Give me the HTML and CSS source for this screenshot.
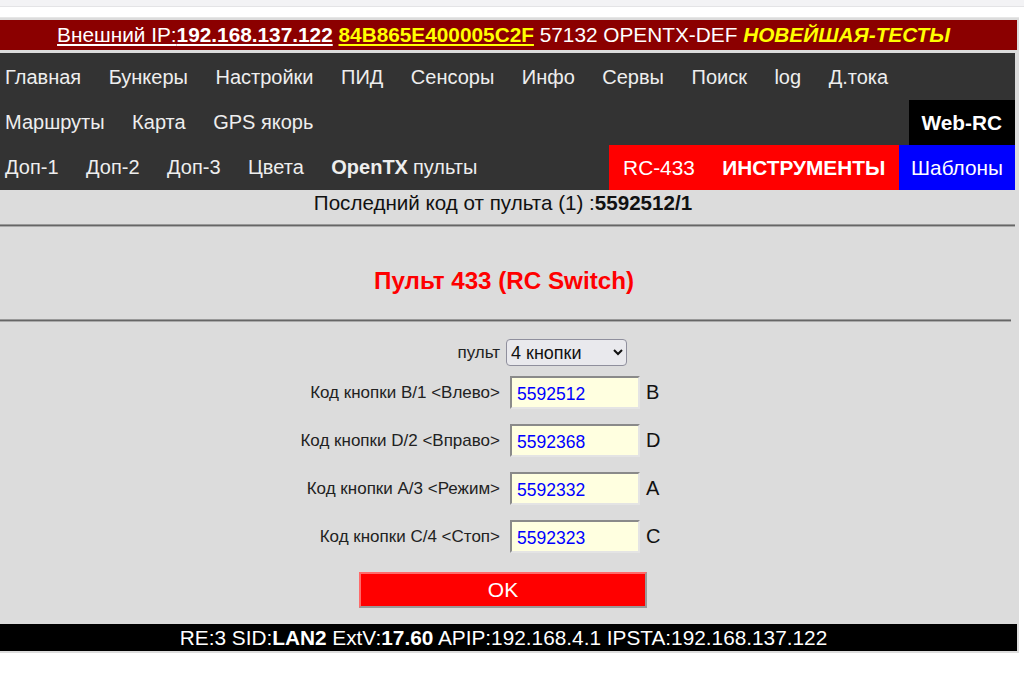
FILE: index.html
```html
<!DOCTYPE html>
<html lang="ru">
<head>
  <meta charset="UTF-8" />
  <meta name="viewport" content="width=device-width, initial-scale=1.0"/>
  <title>RC-433 | Пульты</title>
  <link rel="stylesheet" href="styles.css">
</head>
<body>

<div class="topbar"></div>

<div class="page">
  <div class="header">
    <a href="#" class="ip">Внешний IP:<b>192.168.137.122</b></a>
    <a href="#" class="chip">84B865E400005C2F</a>
    57132 OPENTX-DEF <b class="ver">НОВЕЙШАЯ-ТЕСТЫ</b>
  </div>

  <div class="nav">
    <div class="nav-row first">
      <a href="#">Главная</a>
      <a href="#">Бункеры</a>
      <a href="#">Настройки</a>
      <a href="#">ПИД</a>
      <a href="#">Сенсоры</a>
      <a href="#">Инфо</a>
      <a href="#">Сервы</a>
      <a href="#">Поиск</a>
      <a href="#">log</a>
      <a href="#">Д.тока</a>
    </div>
    <div class="nav-row">
      <a href="#">Маршруты</a>
      <a href="#">Карта</a>
      <a href="#">GPS якорь</a>
      <span class="spacer"></span>
      <a href="#" class="webrc">Web-RC</a>
    </div>
    <div class="nav-row">
      <a href="#">Доп-1</a>
      <a href="#">Доп-2</a>
      <a href="#">Доп-3</a>
      <a href="#">Цвета</a>
      <a href="#"><b>OpenTX</b> пульты</a>
      <span class="spacer"></span>
      <div class="red-group">
        <a href="#">RC-433</a>
        <a href="#"><b>ИНСТРУМЕНТЫ</b></a>
      </div>
      <a href="#" class="blue">Шаблоны</a>
    </div>
  </div>

  <div class="last-code">Последний код от пульта (1) :<b>5592512/1</b></div>
  <hr class="line">

  <h2 class="title">Пульт 433 (RC Switch)</h2>
  <hr class="line short">

  <form class="remote-form" onsubmit="return false;">
    <label class="lbl sel-row">пульт</label>
    <div class="field sel-row">
      <select class="sel">
        <option>4 кнопки</option>
        <option>2 кнопки</option>
        <option>1 кнопка</option>
      </select>
    </div>

    <label class="lbl">Код кнопки B/1 &lt;Влево&gt;</label>
    <div class="field"><input type="text" class="code" value="5592512"><span class="key">B</span></div>

    <label class="lbl">Код кнопки D/2 &lt;Вправо&gt;</label>
    <div class="field"><input type="text" class="code" value="5592368"><span class="key">D</span></div>

    <label class="lbl">Код кнопки A/3 &lt;Режим&gt;</label>
    <div class="field"><input type="text" class="code" value="5592332"><span class="key">A</span></div>

    <label class="lbl">Код кнопки C/4 &lt;Стоп&gt;</label>
    <div class="field"><input type="text" class="code" value="5592323"><span class="key">C</span></div>

    <div class="submit-row">
      <button type="submit" class="ok">OK</button>
    </div>
  </form>

  <div class="footer">RE:3 SID:<b>LAN2</b> ExtV:<b>17.60</b> APIP:192.168.4.1 IPSTA:192.168.137.122</div>
</div>

</body>
</html>
```

FILE: styles.css
```css
body {
  margin: 0;
  font-family: "Liberation Sans", Arial, sans-serif;
  background: #fff;
  color: #111;
}
.topbar {
  height: 6px;
  background: #f3f3f5;
  border-bottom: 1px solid #e4e4e6;
}
.page {
  width: 1019px;
  margin-top: 10px;
  background: #dcdcdc;
  border-top: 1px solid #e6e6e6;
  padding: 2px 0 2px 0;
}
.header {
  width: 1017px;
  height: 30px;
  line-height: 30px;
  background: #8b0000;
  color: #fff;
  font-size: 20.8px;
  text-align: center;
  padding-right: 10px;
  box-sizing: border-box;
  white-space: nowrap;
}
.header a {
  color: #fff;
}
.header .chip {
  color: #ff0;
  font-weight: bold;
}
.header .ver {
  color: #ff0;
  font-style: italic;
}
.nav {
  width: 1015px;
  margin-top: 3px;
  background: #333;
}
.nav-row {
  display: flex;
  height: 45px;
  align-items: stretch;
}
.nav-row.first {
  height: 47px;
}
.nav-row a {
  display: flex;
  align-items: center;
  padding: 0 13.75px;
  color: #eee;
  font-size: 20px;
  text-decoration: none;
  white-space: nowrap;
}
.nav-row > a:first-child {
  padding-left: 5px;
}
.nav-row.first a {
  padding-top: 2px;
}
.nav-row b {
  margin-right: 5px;
}
.spacer {
  flex: 1;
}
.nav-row .webrc {
  background: #000;
  color: #fff;
  font-weight: bold;
  font-size: 20.8px;
  padding: 0 13px;
}
.red-group {
  display: flex;
  background: #f00;
}
.red-group a {
  color: #fff;
  font-size: 20.8px;
}
.red-group b {
  margin: 0;
}
.nav-row .blue {
  background: #00f;
  color: #fff;
  font-size: 20.8px;
  padding: 0 12px;
}
.last-code {
  width: 1015px;
  box-sizing: border-box;
  padding-right: 9px;
  text-align: center;
  font-size: 20.6px;
  line-height: 22px;
  margin-top: 2px;
  color: #111;
}
.line {
  width: 1015px;
  height: 1px;
  margin: 10px 0 0 0;
  border: none;
  border-top: 1px solid #999;
  border-bottom: 1px solid #aaa;
  background: #666;
}
.line.short {
  width: 1011px;
  margin-top: 0;
}
.title {
  width: 1015px;
  margin: 0;
  height: 92px;
  box-sizing: border-box;
  padding: 16px 7px 0 0;
  line-height: 76px;
  text-align: center;
  font-size: 24.2px;
  color: #f00;
}
.remote-form {
  width: 1015px;
  display: grid;
  grid-template-columns: 500px 1fr;
  row-gap: 15px;
  padding-top: 17px;
  align-items: center;
}
.sel-row {
  margin-bottom: -5px;
}
.lbl {
  text-align: right;
  font-size: 17px;
  color: #222;
}
.field {
  display: flex;
  align-items: center;
}
.sel {
  margin-left: 6px;
  width: 121px;
  height: 27px;
  font-family: "Liberation Sans", Arial, sans-serif;
  font-size: 18px;
  color: #111;
  background: #e9e9ed;
  border: 1px solid #8f8f9d;
  border-radius: 4px;
}
.code {
  margin-left: 10px;
  width: 130px;
  height: 33px;
  box-sizing: border-box;
  padding: 4px 5px 0;
  font-family: "Liberation Sans", Arial, sans-serif;
  font-size: 17.5px;
  color: #00f;
  background: #ffffe0;
  border: 2px solid;
  border-color: #8a8a8a #e4e4e4 #e4e4e4 #8a8a8a;
}
.key {
  margin-left: 6px;
  font-size: 20px;
  color: #111;
}
.submit-row {
  grid-column: 1 / 3;
  padding-left: 359px;
  padding-top: 4px;
}
.ok {
  width: 288px;
  height: 36px;
  background: #f00;
  color: #fff;
  font-family: "Liberation Sans", Arial, sans-serif;
  font-size: 21px;
  border: 2px solid;
  border-color: #ff6a6a #9a9a9a #9a9a9a #ff6a6a;
  cursor: pointer;
}
.footer {
  width: 1017px;
  margin-top: 16px;
  height: 27px;
  line-height: 27px;
  background: #000;
  color: #fff;
  font-size: 20.8px;
  text-align: center;
  padding-right: 10px;
  box-sizing: border-box;
}
```
